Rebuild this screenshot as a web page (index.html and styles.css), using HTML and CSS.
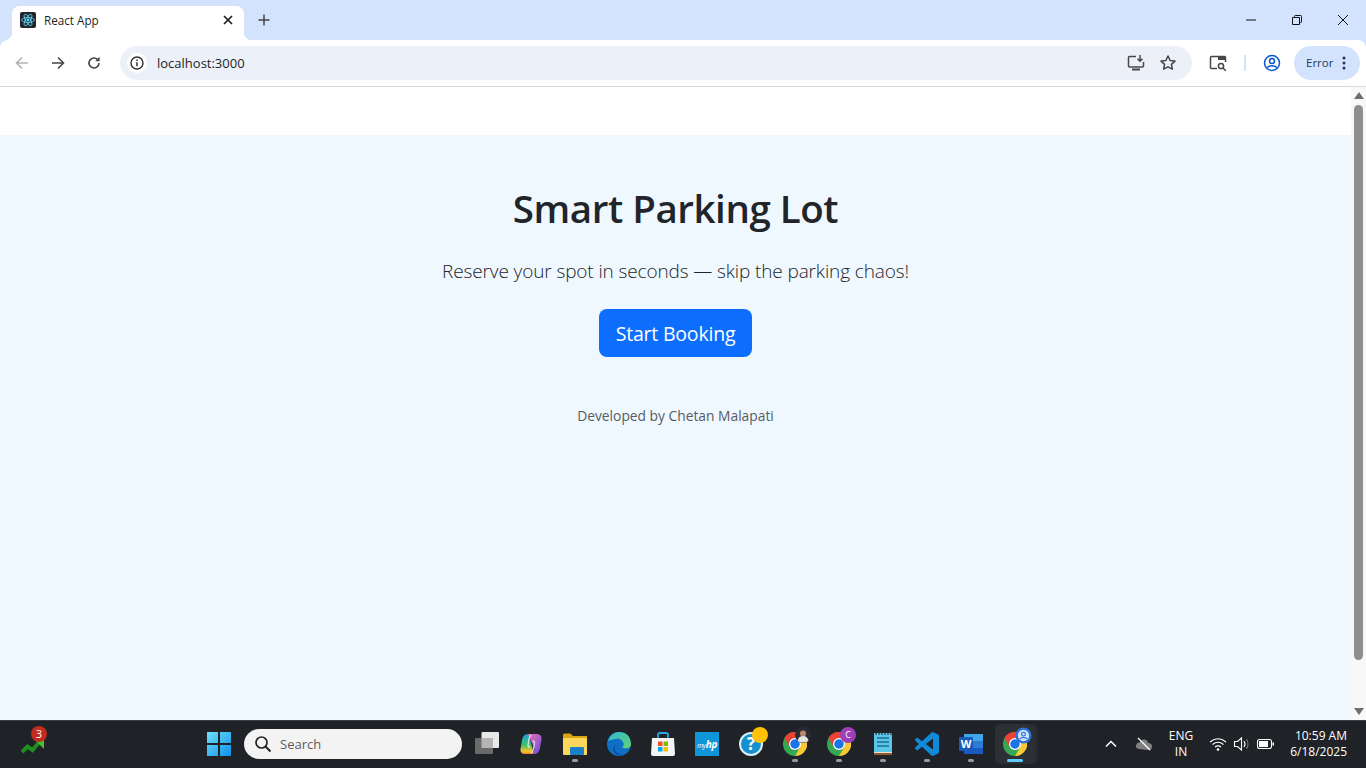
FILE: index.html
```html
<!DOCTYPE html>
<html lang="en">
    <head>
        <meta charset="utf-8">
        <title>React App</title>
        <link rel="stylesheet" href="styles.css">
    </head>
    <body>
        <svg class="defs" width="0" height="0">
            <defs>
                <symbol id="chrome" viewBox="0 0 48 48">
                    <circle cx="24" cy="24" r="24" fill="#34a853"/>
                    <path d="M45 12A24 24 0 0 1 24 48L34 31 24 12Z" fill="#fcc934"/>
                    <path d="M3 12A24 24 0 0 1 45 12H24L14 31Z" fill="#ea4335"/>
                    <circle cx="24" cy="24" r="12" fill="#fff"/>
                    <circle cx="24" cy="24" r="9.5" fill="#1a73e8"/>
                </symbol>
            </defs>
        </svg>

        <div class="tabstrip">
            <div class="tab">
                <svg class="favicon" width="16" height="16" viewBox="0 0 16 16">
                    <rect width="16" height="16" rx="2" fill="#20232a"/>
                    <circle cx="8" cy="8" r="1.4" fill="#61dafb"/>
                    <g fill="none" stroke="#61dafb" stroke-width=".8">
                        <ellipse cx="8" cy="8" rx="6.4" ry="2.5"/>
                        <ellipse cx="8" cy="8" rx="6.4" ry="2.5" transform="rotate(60 8 8)"/>
                        <ellipse cx="8" cy="8" rx="6.4" ry="2.5" transform="rotate(120 8 8)"/>
                    </g>
                </svg>
                <span class="tab-title">React App</span>
                <svg class="tab-close" width="16" height="16" viewBox="0 0 16 16">
                    <path d="M4 4l8 8M12 4l-8 8" stroke="#1f1f1f" stroke-width="1.7" fill="none"/>
                </svg>
            </div>
            <svg class="new-tab" width="16" height="16" viewBox="0 0 16 16">
                <path d="M8 2.500v11M2.500 8h11" stroke="#444" stroke-width="1.5" fill="none"/>
            </svg>
            <div class="win-controls">
                <div class="win-btn">
                    <svg width="12" height="12" viewBox="0 0 12 12"><path d="M1 6h10" stroke="#111" stroke-width="1" fill="none"/></svg>
                </div>
                <div class="win-btn">
                    <svg width="12" height="12" viewBox="0 0 12 12"><path d="M1.500 3.500h7v7h-7zM3.500 3.500V2.300q0-.8.800-.8h5.400q.8 0 .8.800v5.400q0 .8-.8.800H8.500" stroke="#111" stroke-width="1" fill="none"/></svg>
                </div>
                <div class="win-btn">
                    <svg width="12" height="12" viewBox="0 0 12 12"><path d="M1 1l10 10M11 1L1 11" stroke="#111" stroke-width="1" fill="none"/></svg>
                </div>
            </div>
        </div>

        <div class="toolbar">
            <div class="nav-btn">
                <svg width="16" height="16" viewBox="0 0 16 16"><path d="M14 8H2.500M8 2.500L2.500 8 8 13.500" stroke="#b1b3b6" stroke-width="1.600" fill="none"/></svg>
            </div>
            <div class="nav-btn">
                <svg width="16" height="16" viewBox="0 0 16 16"><path d="M2 8h11.500M8 2.500L13.500 8 8 13.500" stroke="#474747" stroke-width="1.600" fill="none"/></svg>
            </div>
            <div class="nav-btn">
                <svg width="16" height="16" viewBox="0 0 16 16"><path d="M13 8a5 5 0 1 1-1.500-3.600" stroke="#474747" stroke-width="1.600" fill="none"/><path d="M13.600 1.800v4.400H9.200z" fill="#474747"/></svg>
            </div>
            <div class="omnibox">
                <div class="site-info">
                    <svg width="16" height="16" viewBox="0 0 16 16"><circle cx="8" cy="8" r="6" stroke="#303030" stroke-width="1.400" fill="none"/><path d="M8 7.200v4M8 4.600v1.500" stroke="#303030" stroke-width="1.500" fill="none"/></svg>
                </div>
                <span class="url">localhost:3000</span>
                <svg class="omni-icon" width="20" height="20" viewBox="0 0 20 20"><path d="M10 3.500H3.500q-1 0-1 1V13q0 1 1 1h13q1 0 1-1V9" stroke="#474747" stroke-width="1.500" fill="none"/><path d="M6 16.500h8" stroke="#474747" stroke-width="2" fill="none"/><path d="M14 2v6M11.500 5.800L14 8.300l2.500-2.500" stroke="#474747" stroke-width="1.500" fill="none"/></svg>
                <svg class="omni-icon" width="20" height="20" viewBox="0 0 20 20"><path d="M10 3l2.100 4.500 4.900.6-3.600 3.300 1 4.800L10 13.800l-4.400 2.400 1-4.800L3 8.100l4.900-.6z" stroke="#474747" stroke-width="1.500" fill="none" stroke-linejoin="round"/></svg>
            </div>
            <svg class="tool-icon" width="20" height="20" viewBox="0 0 20 20"><path d="M9 15.500H3.500q-1-.1-1-1V4.500q0-1 1-1h13q1 0 1 1V9" stroke="#474747" stroke-width="1.500" fill="none"/><path d="M10 3.500h7.500v3.500H10z" fill="#474747"/><circle cx="13" cy="13" r="2.600" stroke="#474747" stroke-width="1.500" fill="none"/><path d="M15 15l2.800 2.800" stroke="#474747" stroke-width="1.600" fill="none"/></svg>
            <span class="tool-sep"></span>
            <svg class="tool-icon profile" width="20" height="20" viewBox="0 0 20 20"><circle cx="10" cy="10" r="7.500" stroke="#0b57d0" stroke-width="1.500" fill="none"/><circle cx="10" cy="8" r="2.500" stroke="#0b57d0" stroke-width="1.500" fill="none"/><path d="M4.800 14.500q5.200-3.600 10.400 0" stroke="#0b57d0" stroke-width="1.500" fill="none"/></svg>
            <div class="error-pill">
                <span>Error</span>
                <svg width="4" height="14" viewBox="0 0 4 14"><circle cx="2" cy="2" r="1.500" fill="#1f3760"/><circle cx="2" cy="7" r="1.500" fill="#1f3760"/><circle cx="2" cy="12" r="1.500" fill="#1f3760"/></svg>
            </div>
        </div>

        <div class="viewport">
            <div class="page">
                <div class="page-top"></div>
                <main class="hero">
                    <h1 class="hero-title">Smart Parking Lot</h1>
                    <p class="hero-lead">Reserve your spot in seconds — skip the parking chaos!</p>
                    <a class="hero-btn">Start Booking</a>
                    <p class="hero-footer">Developed by Chetan Malapati</p>
                </main>
            </div>
            <div class="scrollbar">
                <span class="arrow-up"></span>
                <span class="thumb"></span>
                <span class="arrow-down"></span>
            </div>
        </div>

        <div class="taskbar">
            <div class="widget">
                <svg width="26" height="26" viewBox="0 0 26 26">
                    <path d="M2 21l5.500-5.500 5 3.500 6-7" stroke="#1f8f22" stroke-width="4" fill="none"/>
                    <path d="M15 9h9v9z" fill="#46bf35"/>
                </svg>
                <span class="widget-badge">3</span>
            </div>
            <div class="start">
                <svg width="24" height="24" viewBox="0 0 24 24">
                    <defs>
                        <linearGradient id="win" x1="0" y1="0" x2="1" y2="1"><stop offset="0" stop-color="#6fe0fb"/><stop offset="1" stop-color="#0f8fe8"/></linearGradient>
                    </defs>
                    <path d="M0 .500q0-.5.500-.5H11v11H0zM13 0h10.500q.5 0 .5.500V11H13zM0 13h11v11H.500q-.5 0-.5-.5zM13 13h11v10.500q0 .5-.5.5H13z" fill="url(#win)"/>
                </svg>
            </div>
            <div class="search">
                <svg width="18" height="18" viewBox="0 0 18 18"><circle cx="7.500" cy="7.500" r="5.500" stroke="#222" stroke-width="1.700" fill="none"/><path d="M11.500 11.500L16.500 16.500" stroke="#222" stroke-width="1.900" fill="none"/></svg>
                <span>Search</span>
            </div>
            <div class="tb-apps">
                <div class="tb-item">
                    <svg width="24" height="24" viewBox="0 0 24 24"><rect x="6.500" y="0" rx="1" width="17.500" height="16" fill="#e8e8e8"/><rect x="0" y="6" rx="1" width="18" height="16" fill="#6a6a6a"/><rect x="6.500" y="6" width="11.500" height="10" fill="#b4b4b4"/></svg>
                </div>
                <div class="tb-item">
                    <svg width="24" height="24" viewBox="0 0 24 24">
                        <defs>
                            <linearGradient id="cpa" x1="0" y1="0" x2="0" y2="1"><stop offset="0" stop-color="#1f9fe0"/><stop offset=".55" stop-color="#3fbf6a"/><stop offset=".85" stop-color="#f5c52c"/><stop offset="1" stop-color="#f28a2e"/></linearGradient>
                            <linearGradient id="cpb" x1="0" y1="0" x2="1" y2="1"><stop offset="0" stop-color="#f06fb0"/><stop offset="1" stop-color="#6a4fe0"/></linearGradient>
                        </defs>
                        <path d="M15 22H6q-5 0-4.500-5l1.500-9q1-6 6-6h5q-2 .5-3 5z" fill="url(#cpa)"/>
                        <path d="M9 2h9q5 .5 4.500 5L21 16q-1 6-6 6h-3q3-.5 3.500-5z" fill="url(#cpb)"/>
                        <path d="M12 3q-1.500 1-2 4l-1 6q0 2 2 2M12 21q2-1 2.500-4l1-6q0-2-2-2" stroke="#e9f0ff" stroke-width="1.300" fill="none" opacity=".85"/>
                    </svg>
                </div>
                <div class="tb-item">
                    <svg width="24" height="24" viewBox="0 0 24 24"><path d="M0 3q0-1.500 1.500-1.500h6L10 4h14v4H0z" fill="#d9a514"/><path d="M0 6h24v16q0 1-1 1H1q-1 0-1-1z" fill="#fbd75a"/><rect x="7" y="15" width="14" height="8" rx="1" fill="#1a80c8"/></svg>
                    <span class="tb-dot"></span>
                </div>
                <div class="tb-item">
                    <svg width="24" height="24" viewBox="0 0 24 24">
                        <defs>
                            <linearGradient id="edgea" x1="0" y1="0" x2="1" y2="1"><stop offset="0" stop-color="#2fb8d8"/><stop offset="1" stop-color="#62d36f"/></linearGradient>
                        </defs>
                        <circle cx="12" cy="12" r="12" fill="#0f6fc4"/>
                        <path d="M1 9Q4 0 12 0q11 0 12 12 0 3-3 4-4 1-6-1 3-2 1-5-3-5-8-3-5 1-7 2z" fill="url(#edgea)"/>
                        <path d="M9 12q-3 4 0 8 3 3 8 2-9 3-11-5 0-3 3-5z" fill="#0a4a94"/>
                    </svg>
                </div>
                <div class="tb-item">
                    <svg width="24" height="24" viewBox="0 0 24 24"><path d="M7 7V3q0-2 2-2h6q2 0 2 2v4" stroke="#2aa6e0" stroke-width="1.800" fill="none"/><path d="M1 6h22l1 16q0 2-2 2H2q-2 0-2-2z" fill="#f4f4f4"/><rect x="7" y="9.500" width="4.500" height="4.500" fill="#f25022"/><rect x="12.500" y="9.500" width="4.500" height="4.500" fill="#7fba00"/><rect x="7" y="15" width="4.500" height="4.500" fill="#00a4ef"/><rect x="12.500" y="15" width="4.500" height="4.500" fill="#ffb900"/></svg>
                </div>
                <div class="tb-item">
                    <div class="myhp">my<span class="myhp-hp">hp</span></div>
                </div>
                <div class="tb-item">
                    <div class="help">?</div>
                    <span class="help-dot"></span>
                </div>
                <div class="tb-item">
                    <svg width="24" height="24"><use href="#chrome"/></svg>
                    <svg class="badge-avatar" width="16" height="16" viewBox="0 0 16 16"><circle cx="8" cy="8" r="8" fill="#2b2b33"/><circle cx="8" cy="6.500" r="3" fill="#b98a6e"/><path d="M2.500 14q1-5 5.500-5t5.500 5q-5.500 3-11 0z" fill="#e4e4e4"/></svg>
                    <span class="tb-dot"></span>
                </div>
                <div class="tb-item">
                    <svg width="24" height="24"><use href="#chrome"/></svg>
                    <span class="badge-c">C</span>
                    <span class="tb-dot"></span>
                </div>
                <div class="tb-item">
                    <svg width="20" height="24" viewBox="0 0 20 24"><rect x="1" y="1" width="18" height="22" fill="#5cc6e8"/><path d="M1 20h18v3H1z" fill="#8a5a34"/><path d="M1 20h18v1H1z" fill="#f0e0c8"/><path d="M4 6h12M4 10h12M4 14h12" stroke="#1d6f93" stroke-width="1.600" fill="none"/><path d="M3 1v2M6 1v2M9 1v2M12 1v2M15 1v2M18 1v2" stroke="#1f2226" stroke-width="1"/></svg>
                    <span class="tb-dot"></span>
                </div>
                <div class="tb-item">
                    <svg width="24" height="24" viewBox="0 0 24 24"><path d="M23.150 2.587L18.210.21a1.494 1.494 0 0 0-1.705.29l-9.460 8.630-4.120-3.128a.999.999 0 0 0-1.276.057L.327 7.261A1 1 0 0 0 .326 8.740L3.899 12 .326 15.260a1 1 0 0 0 .001 1.479L1.650 17.940a.999.999 0 0 0 1.276.057l4.120-3.128 9.460 8.630a1.492 1.492 0 0 0 1.704.29l4.942-2.377A1.500 1.500 0 0 0 24 20.060V3.939a1.500 1.500 0 0 0-.850-1.352zm-5.146 14.861L10.826 12l7.178-5.448v10.896z" fill="#0f8ad8"/></svg>
                    <span class="tb-dot"></span>
                </div>
                <div class="tb-item">
                    <svg width="24" height="24" viewBox="0 0 24 24"><rect x="5" y="2" width="19" height="7" fill="#41a5ee"/><rect x="5" y="9" width="19" height="7" fill="#2b7cd3"/><rect x="5" y="16" width="19" height="6" fill="#185abd"/></svg>
                    <span class="word-w">W</span>
                    <span class="tb-dot"></span>
                </div>
                <div class="tb-item tb-active">
                    <svg width="24" height="24"><use href="#chrome"/></svg>
                    <svg class="badge-profile" width="17" height="17" viewBox="0 0 18 18"><circle cx="9" cy="9" r="8.500" fill="#2a6fd4"/><circle cx="9" cy="9" r="6" fill="#cfe0fb"/><circle cx="9" cy="7.500" r="2" fill="none" stroke="#2a6fd4" stroke-width="1.200"/><path d="M5 12.500q4-3 8 0" stroke="#2a6fd4" stroke-width="1.200" fill="none"/></svg>
                    <span class="tb-bar"></span>
                </div>
            </div>
            <div class="tray">
                <div class="tray-item">
                    <svg width="16" height="16" viewBox="0 0 16 16"><path d="M3 10.500L8 5.500l5 5" stroke="#fff" stroke-width="1.500" fill="none"/></svg>
                </div>
                <div class="tray-item">
                    <svg width="18" height="18" viewBox="0 0 18 18"><path d="M4 14q-3.500-.5-3-3.500t3.500-3Q6 4 9.500 4.500T13 8q4 0 4 3.500T13.500 15z" fill="#9a9a9a" opacity=".8"/><path d="M3 3l12 12" stroke="#fff" stroke-width="1.300"/></svg>
                </div>
                <div class="tray-lang">ENG<br>IN</div>
                <div class="tray-icons">
                    <svg width="18" height="18" viewBox="0 0 18 18"><path d="M1 7q8-6.500 16 0M3.500 9.500q5.500-4.500 11 0M6 12q3-2.200 6 0" stroke="#fff" stroke-width="1.200" fill="none"/><circle cx="9" cy="14.500" r="1.300" fill="#fff"/></svg>
                    <svg width="18" height="18" viewBox="0 0 18 18"><path d="M1.500 6.500h3L8.500 3v12l-4-3.500h-3z" stroke="#fff" stroke-width="1.100" fill="none"/><path d="M11 6q2 3 0 6" stroke="#fff" stroke-width="1.100" fill="none"/><path d="M13.500 4q3 5 0 10" stroke="#777" stroke-width="1.100" fill="none"/></svg>
                    <svg width="18" height="18" viewBox="0 0 18 18"><rect x=".5" y="4.500" width="14" height="9" rx="2" stroke="#fff" stroke-width="1.100" fill="none"/><rect x="2" y="6" width="9" height="6" fill="#fff"/><rect x="15.500" y="7.500" width="1.500" height="3" fill="#fff"/></svg>
                </div>
                <div class="tray-clock">10:59 AM<br>6/18/2025</div>
            </div>
        </div>
    </body>
</html>
```

FILE: styles.css
```css
* {
    box-sizing: border-box;
}

html, body {
    height: 100%;
}

body {
    margin: 0;
    display: flex;
    flex-direction: column;
    height: 768px;
    overflow: hidden;
    background: #d3e3fd;
    font-family: "Open Sans", "Noto Sans", sans-serif;
    color: #1f1f1f;
}

svg {
    display: block;
    flex: none;
}

.defs {
    position: absolute;
}

/* browser chrome */
.tabstrip {
    display: flex;
    align-items: flex-end;
    height: 40px;
    flex: none;
    padding-left: 12px;
    background: #d3e3fd;
}

.tab {
    position: relative;
    display: flex;
    align-items: center;
    width: 232px;
    height: 34px;
    padding: 0 8px 6px;
    background: #fff;
    border-radius: 8px 8px 0 0;
}

.tab::before,
.tab::after {
    content: "";
    position: absolute;
    bottom: 0;
    width: 8px;
    height: 8px;
}

.tab::before {
    left: -8px;
    background: radial-gradient(circle at 0 0, #d3e3fd 8px, #fff 8.5px);
}

.tab::after {
    right: -8px;
    background: radial-gradient(circle at 100% 0, #d3e3fd 8px, #fff 8.5px);
}

.tab-title {
    margin-left: 8px;
    flex: 1;
    font-size: 11.700px;
}

.new-tab {
    margin: 0 0 12px 12px;
}

.win-controls {
    display: flex;
    height: 40px;
    margin-left: auto;
}

.win-btn {
    display: flex;
    align-items: center;
    justify-content: center;
    width: 46px;
}

.toolbar {
    display: flex;
    align-items: center;
    flex: none;
    height: 47px;
    padding: 0 6px 1px 4px;
    background: #fff;
    border-bottom: 1px solid #d9d9d9;
    border-radius: 8px 8px 0 0;
}

.nav-btn {
    display: flex;
    align-items: center;
    justify-content: center;
    width: 36px;
    height: 34px;
}

.omnibox {
    display: flex;
    align-items: center;
    flex: 1;
    height: 34px;
    margin-left: 8px;
    padding-left: 8px;
    padding-right: 14px;
    gap: 12px;
    background: #ecf1f9;
    border-radius: 17px;
}

.site-info {
    display: flex;
    align-items: center;
    justify-content: center;
    width: 20px;
    height: 20px;
    margin-left: -1px;
    background: #fff;
    border-radius: 50%;
}

.url {
    flex: 1;
    margin-left: -2px;
    font-size: 13px;
}

.tool-icon {
    margin-left: 16px;
}

.tool-sep {
    width: 2px;
    height: 16px;
    margin-left: 16px;
    background: #d3e3fd;
}

.profile {
    margin-left: 16px;
}

.error-pill {
    display: flex;
    align-items: center;
    justify-content: space-between;
    width: 66px;
    height: 34px;
    margin-left: 12px;
    padding: 0 14px 0 12px;
    background: #d3e3fd;
    border-radius: 17px;
    font-size: 11.500px;
    color: #1f3760;
}

/* page */
.viewport {
    display: flex;
    flex: 1;
    min-height: 0;
    background: #fff;
}

.page {
    display: flex;
    flex-direction: column;
    flex: 1;
}

.page-top {
    height: 48px;
    flex: none;
    background: #fff;
}

.hero {
    flex: 1;
    padding-top: 49px;
    background: #f0f8ff;
    text-align: center;
}

.hero-title {
    margin: 0 0 24px;
    font-size: 38.500px;
    font-weight: 600;
    line-height: 48px;
    letter-spacing: -.45px;
    color: #212529;
}

.hero-lead {
    margin: 0 0 23px;
    font-size: 19px;
    font-weight: 300;
    line-height: 30px;
    letter-spacing: -.12px;
    color: #212529;
}

.hero-btn {
    display: inline-block;
    width: 153px;
    height: 48px;
    font-size: 19.500px;
    line-height: 49px;
    letter-spacing: -.2px;
    color: #fff;
    background: #0d6efd;
    border-radius: 8px;
}

.hero-footer {
    margin: 48px 0 0;
    font-size: 13.800px;
    line-height: 22px;
    color: #555c63;
}

.scrollbar {
    display: flex;
    flex-direction: column;
    align-items: center;
    width: 15px;
    padding-top: 5px;
    background: #f8f8f8;
}

.arrow-up,
.arrow-down {
    width: 0;
    height: 0;
    border-left: 5px solid transparent;
    border-right: 5px solid transparent;
}

.arrow-up {
    border-bottom: 7px solid #6e6e6e;
}

.arrow-down {
    margin-top: 48px;
    border-top: 7px solid #6e6e6e;
}

.thumb {
    width: 9px;
    height: 555px;
    margin-top: 6px;
    background: #8e8e8e;
    border-radius: 5px;
}

/* taskbar */
.taskbar {
    display: flex;
    align-items: center;
    flex: none;
    height: 48px;
    padding-bottom: 1px;
    background: #1f2226;
    border-top: 1px solid #3a3c40;
    color: #fff;
}

.widget {
    position: relative;
    width: 199px;
    padding-left: 20px;
}

.widget-badge {
    position: absolute;
    left: 31px;
    top: -5px;
    width: 16px;
    height: 16px;
    font-size: 11px;
    line-height: 16px;
    text-align: center;
    background: #c42b1c;
    border-radius: 50%;
}

.start {
    display: flex;
    align-items: center;
    justify-content: center;
    width: 40px;
}

.search {
    display: flex;
    align-items: center;
    gap: 8px;
    width: 218px;
    height: 30px;
    margin-left: 5px;
    margin-right: 3px;
    padding-left: 10px;
    background: #f3f3f3;
    border-radius: 15px;
    font-size: 13px;
    color: #5d5d5d;
}

.tb-apps {
    display: flex;
}

.tb-item {
    position: relative;
    display: flex;
    align-items: center;
    justify-content: center;
    width: 44px;
    height: 46px;
}

.tb-active::before {
    content: "";
    position: absolute;
    left: 2px;
    right: 2px;
    top: 3px;
    height: 40px;
    background: #2c2f33;
    border-radius: 5px;
    box-shadow: 3px 0 0 #26292d;
}

.tb-active svg {
    position: relative;
}

.tb-dot {
    position: absolute;
    left: 19px;
    bottom: 5px;
    width: 6px;
    height: 3px;
    background: #9b9b9b;
    border-radius: 2px;
}

.tb-bar {
    position: absolute;
    left: 14px;
    bottom: 5px;
    width: 16px;
    height: 3px;
    background: #60cdff;
    border-radius: 2px;
}

.myhp {
    width: 24px;
    height: 24px;
    background: #0f96d6;
    font-size: 7px;
    font-style: italic;
    line-height: 24px;
    text-align: center;
    letter-spacing: -.3px;
}

.myhp-hp {
    font-size: 10px;
    font-weight: 700;
}

.help {
    width: 24px;
    height: 24px;
    border: 2px solid #dceef8;
    border-radius: 50%;
    background: #1591d0;
    font-size: 17px;
    font-weight: 700;
    line-height: 20px;
    text-align: center;
}

.help-dot {
    position: absolute;
    left: 23px;
    top: 6px;
    width: 16px;
    height: 16px;
    background: #ffc107;
    border-radius: 50%;
}

.badge-avatar {
    position: absolute;
    left: 22px;
    top: 6px;
}

.tb-active .badge-profile {
    position: absolute;
    left: 22px;
    top: 6px;
}

.badge-c {
    position: absolute;
    left: 23px;
    top: 6px;
    width: 16px;
    height: 16px;
    font-size: 9px;
    line-height: 16px;
    text-align: center;
    background: #9c3fb8;
    border-radius: 50%;
}

.word-w {
    position: absolute;
    left: 10px;
    top: 16px;
    width: 14px;
    height: 14px;
    font-size: 11px;
    font-weight: 700;
    line-height: 14px;
    text-align: center;
    background: #1b5cbb;
    border-radius: 1px;
}

.tray {
    display: flex;
    align-items: center;
    margin-left: 57px;
    font-size: 12px;
}

.tray-item {
    display: flex;
    align-items: center;
    justify-content: center;
    width: 33px;
}

.tray-lang {
    width: 42px;
    line-height: 16px;
    text-align: center;
}

.tray-icons {
    display: flex;
    gap: 6px;
    margin-left: 7px;
}

.tray-clock {
    width: 64px;
    margin-left: 8px;
    line-height: 16px;
    text-align: right;
}
```
